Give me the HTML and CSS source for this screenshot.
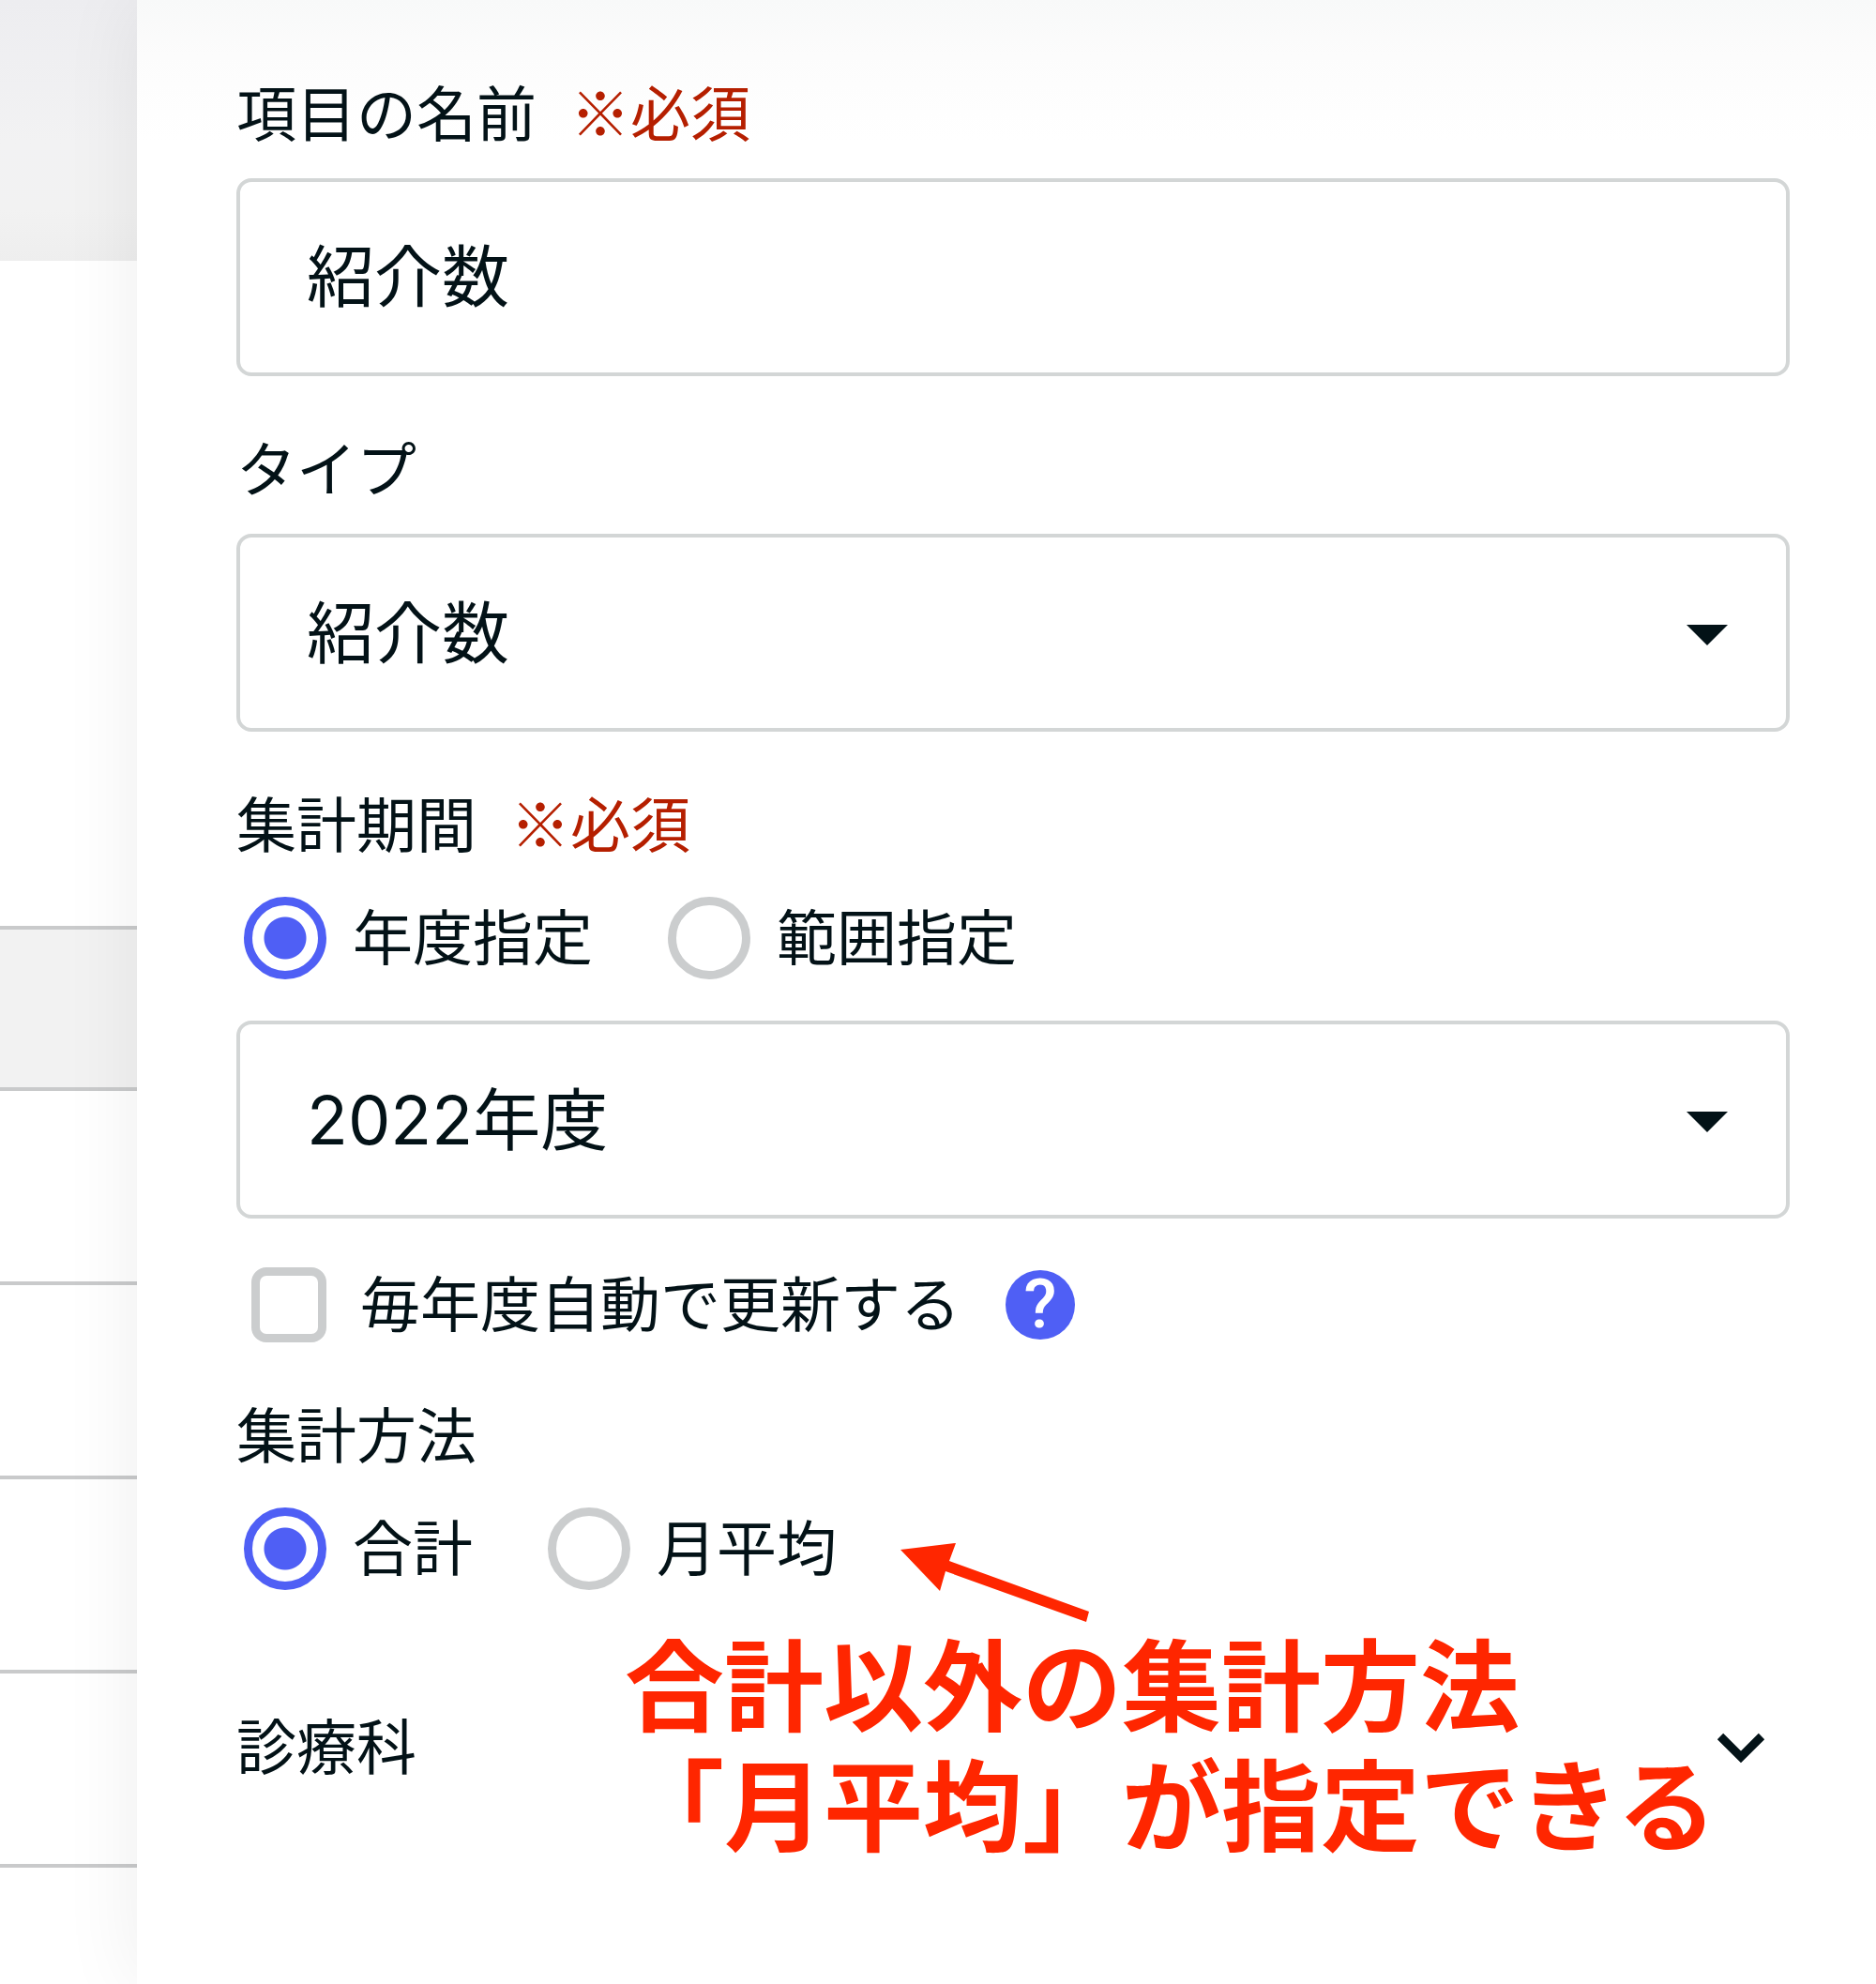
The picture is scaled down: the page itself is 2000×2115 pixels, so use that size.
FILE: index.html
```
<!DOCTYPE html>
<html lang="ja">
<head>
  <meta charset="UTF-8">
  <meta name="viewport" content="width=device-width, initial-scale=1.0">
  <title>項目の編集</title>
  <link rel="stylesheet" href="styles.css">
</head>
<body>
  <div class="page">
    <div class="backdrop">
      <div class="backdrop-head"></div>
      <div class="backdrop-space"></div>
      <div class="row row-head"></div>
      <div class="row"></div>
      <div class="row"></div>
      <div class="row"></div>
      <div class="row"></div>
    </div>

    <form class="panel">
      <div class="field">
        <label class="label" for="name">項目の名前<span class="required">※必須</span></label>
        <input class="control text" type="text" id="name" value="紹介数">
      </div>

      <div class="field">
        <label class="label" for="type">タイプ</label>
        <div class="select">
          <select class="control" id="type">
            <option>紹介数</option>
          </select>
          <svg class="caret" viewBox="0 0 44 22"><path d="M0 0h44L22 22z"/></svg>
        </div>
      </div>

      <fieldset class="field period">
        <legend class="label">集計期間<span class="required">※必須</span></legend>
        <div class="radios">
          <label class="choice"><input type="radio" name="period" checked>年度指定</label>
          <label class="choice"><input type="radio" name="period">範囲指定</label>
        </div>
        <div class="select year">
          <select class="control" aria-label="年度">
            <option>2022年度</option>
          </select>
          <svg class="caret" viewBox="0 0 44 22"><path d="M0 0h44L22 22z"/></svg>
        </div>
      </fieldset>

      <div class="auto-update">
        <label class="choice check"><input type="checkbox">毎年度自動で更新する</label>
        <button class="help" type="button">?</button>
      </div>

      <div class="annotated">
        <fieldset class="field">
          <legend class="label">集計方法</legend>
          <div class="radios">
            <label class="choice"><input type="radio" name="method" checked>合計</label>
            <label class="choice"><input type="radio" name="method">月平均</label>
          </div>
        </fieldset>

        <button class="accordion" type="button">
          <span>診療科</span>
          <svg class="chevron" viewBox="0 0 52 33"><path d="M4 4l22 22L48 4"/></svg>
        </button>

        <svg class="arrow" viewBox="0 0 202 86"><path d="M0 8L59 1L52 20L201 74L198 85L48 31L42 52z"/></svg>
        <p class="note">合計以外の集計方法<br>「月平均」が指定できる</p>
      </div>
    </form>
  </div>
</body>
</html>
```
FILE: styles.css
```
* {
  box-sizing: border-box;
}
body {
  margin: 0;
  font-family: Inter, "Noto Sans CJK JP", sans-serif;
  font-size: 64px;
  line-height: 96px;
  color: #031217;
  background-color: #fff;
}
.page {
  display: flex;
  min-height: 100vh;
  overflow: hidden;
}

/* table behind the panel */
.backdrop {
  width: 146px;
  flex: none;
}
.backdrop-head {
  height: 278px;
  background: linear-gradient(#ededf0, #f2f2f3 55%, #f2f2f2 80%, #eeeeee);
}
.backdrop-space {
  height: 709px;
}
.row {
  height: 207px;
  border-bottom: 4px solid #c9cacb;
}
.row-head {
  height: 176px;
  border-top: 4px solid #c9cacb;
  background-color: #f2f2f2;
}

.panel {
  position: relative;
  flex: 1;
  min-width: 0;
  padding: 74px 92px 48px 106px;
  background: linear-gradient(#f8f9f9, #fcfcfc 60px, #fff 150px);
  box-shadow: 0 0 80px rgba(0, 0, 0, 0.07);
}
.field {
  margin: 0 0 52px;
  padding: 0;
  border: 0;
}
.label {
  display: block;
  margin-bottom: 20px;
  padding: 0;
}
.required {
  margin-left: 36px;
  font-family: "Noto Sans CJK JP", sans-serif;
  line-height: 64px;
  color: #b51f00;
}
.control {
  display: block;
  width: 100%;
  height: 211px;
  padding: 0 71px;
  border: 4px solid #d3d6d6;
  border-radius: 16px;
  background-color: #fff;
  font-family: inherit;
  font-size: 72px;
  color: inherit;
  appearance: none;
}
.text {
  padding-bottom: 12px;
}
.select {
  position: relative;
}
.caret {
  position: absolute;
  top: 97px;
  right: 66px;
  width: 44px;
  height: 22px;
  fill: #031217;
  pointer-events: none;
}
.radios {
  display: flex;
  gap: 80px;
  padding: 8px;
}
.period {
  margin-bottom: 48px;
}
.year {
  margin-top: 36px;
}
.choice {
  display: flex;
  align-items: center;
  gap: 28px;
  height: 88px;
}
.choice input {
  flex: none;
  width: 88px;
  height: 88px;
  margin: 0;
  border: 9px solid #cbcdce;
  border-radius: 50%;
  background-color: #fff;
  appearance: none;
}
.choice input[type="radio"]:checked {
  border-color: #4f5ff5;
  background: radial-gradient(circle, #4f5ff5 22px, #fff 23px);
}
.check {
  gap: 36px;
}
.check input {
  width: 80px;
  height: 80px;
  border-radius: 16px;
}
.auto-update {
  display: flex;
  align-items: center;
  gap: 48px;
  margin-bottom: 48px;
  padding-left: 16px;
}
.help {
  width: 74px;
  height: 74px;
  padding: 0;
  border: 0;
  border-radius: 50%;
  background-color: #4f5ff5;
  font-family: Roboto, sans-serif;
  font-size: 72px;
  font-weight: 500;
  line-height: 74px;
  color: #fff;
}
.accordion {
  display: flex;
  align-items: center;
  justify-content: space-between;
  width: 100%;
  margin-top: 112px;
  padding: 0 26px 0 0;
  border: 0;
  background: none;
  font: inherit;
  color: inherit;
}
.chevron {
  width: 52px;
  height: 33px;
  fill: none;
  stroke: #031217;
  stroke-width: 9;
}

/* red note over the form */
.annotated {
  position: relative;
}
.annotated .field {
  margin-bottom: 0;
}
.arrow {
  position: absolute;
  top: 161px;
  left: 708px;
  width: 202px;
  height: 86px;
  fill: #ff2600;
}
.note {
  position: absolute;
  top: 252px;
  left: 414px;
  margin: 0;
  font-size: 106px;
  font-weight: bold;
  line-height: 128px;
  white-space: nowrap;
  color: #ff2600;
  pointer-events: none;
}
```
